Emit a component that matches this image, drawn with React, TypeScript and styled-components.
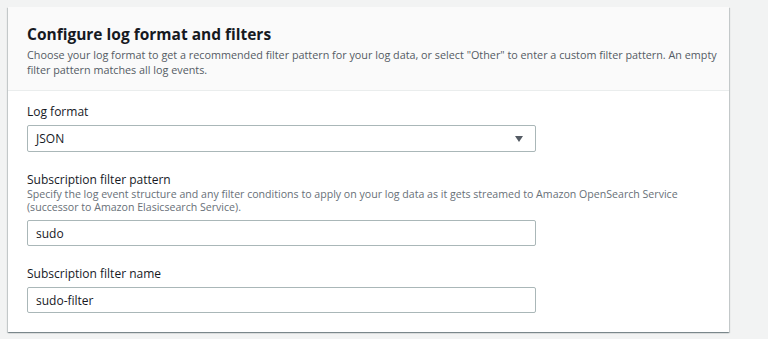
import React from "react";
import styled, { createGlobalStyle } from "styled-components";

const GlobalStyle = createGlobalStyle`
  body {
    margin: 0;
    background: #f2f3f3;
    font-family: "Open Sans", "Noto Sans", sans-serif;
    color: #16191f;
  }
`;

export default function App() {
  return (
    <>
      <GlobalStyle />
      <ScPage>
        <ScPanel>
          <ScHeader>
            <ScTitle>Configure log format and filters</ScTitle>
            <ScHeaderText>
              Choose your log format to get a recommended filter pattern for your log data, or
              select "Other" to enter a custom filter pattern. An empty filter pattern matches all
              log events.
            </ScHeaderText>
          </ScHeader>

          <ScBody>
            <ScField>
              <ScLabel>Log format</ScLabel>
              <ScSelect>
                <span>JSON</span>
                <svg width="8" height="6" viewBox="0 0 8 6">
                  <path d="M0 0 H8 L4 6 Z" fill="#545b64" />
                </svg>
              </ScSelect>
            </ScField>

            <ScField>
              <ScLabel>Subscription filter pattern</ScLabel>
              <ScHint>
                Specify the log event structure and any filter conditions to apply on your log data
                as it gets streamed to Amazon OpenSearch Service (successor to Amazon Elasicsearch
                Service).
              </ScHint>
              <ScInput defaultValue="sudo" readOnly />
            </ScField>

            <ScField>
              <ScLabel>Subscription filter name</ScLabel>
              <ScInput defaultValue="sudo-filter" readOnly />
            </ScField>
          </ScBody>
        </ScPanel>
      </ScPage>
    </>
  );
}

const ScPage = styled.div`
  padding: 7px 0 6px 8px;
`;

const ScPanel = styled.section`
  width: 721px;
  background: #ffffff;
  box-shadow: 0 1px 1px 0 rgba(0, 28, 36, 0.3), 1px 1px 1px 0 rgba(0, 28, 36, 0.15),
    -1px 1px 1px 0 rgba(0, 28, 36, 0.15);
`;

const ScHeader = styled.div`
  background: #fafafa;
  border-bottom: 1px solid #eaeded;
  padding: 17px 12px 13px 19px;
`;

const ScTitle = styled.h2`
  margin: 0;
  font-size: 15.5px;
  line-height: 20px;
  font-weight: 700;
  color: #16191f;
`;

const ScHeaderText = styled.p`
  margin: 3px 0 0;
  font-size: 10.8px;
  line-height: 15px;
  color: #545b64;
`;

const ScBody = styled.div`
  display: flex;
  flex-direction: column;
  gap: 20px;
  padding: 13px 19px 19px;
`;

const ScField = styled.div`
  display: flex;
  flex-direction: column;
  width: 509px;
`;

const ScLabel = styled.label`
  font-size: 12px;
  line-height: 16px;
  color: #16191f;
  margin-bottom: 5px;
`;

const ScHint = styled.p`
  margin: -5px 0 7px;
  font-size: 10.6px;
  line-height: 12.5px;
  color: #687078;
  width: 680px;
`;

const ScSelect = styled.div`
  box-sizing: border-box;
  height: 27px;
  border: 1px solid #aab7b8;
  border-radius: 2px;
  padding: 0 12px 0 8px;
  display: flex;
  align-items: center;
  justify-content: space-between;
  font-size: 12px;
  color: #16191f;
`;

const ScInput = styled.input`
  box-sizing: border-box;
  width: 100%;
  height: 26px;
  border: 1px solid #aab7b8;
  border-radius: 2px;
  padding: 0 8px;
  font-family: inherit;
  font-size: 12px;
  color: #16191f;
  background: #ffffff;
  outline: none;
`;
